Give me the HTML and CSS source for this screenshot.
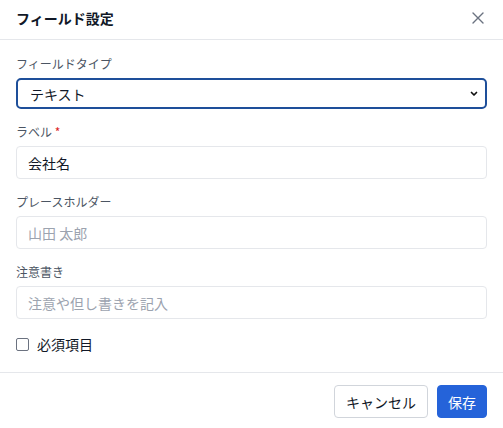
FILE: index.html
```html
<!DOCTYPE html>
<html lang="ja">
<head>
<meta charset="utf-8">
<title>フィールド設定</title>
<link rel="stylesheet" href="styles.css">
</head>
<body>
<div class="dialog">
  <header class="dialog-header">
    <h1 class="dialog-title">フィールド設定</h1>
    <button class="close-btn" type="button" aria-label="閉じる">
      <svg width="14" height="14" viewBox="0 0 14 14"><path d="M2 2L12 12M12 2L2 12" stroke="#6b7280" stroke-width="1.4" stroke-linecap="round"/></svg>
    </button>
  </header>
  <div class="dialog-body">
    <div class="field">
      <label class="field-label">フィールドタイプ</label>
      <div class="select">
        <span>テキスト</span>
        <svg width="10" height="10" viewBox="0 0 10 10"><path d="M2.5 3.5L5 6L7.5 3.5" fill="none" stroke="#111" stroke-width="1.7" stroke-linecap="round" stroke-linejoin="round"/></svg>
      </div>
    </div>
    <div class="field">
      <label class="field-label">ラベル <span class="req">*</span></label>
      <div class="input">会社名</div>
    </div>
    <div class="field">
      <label class="field-label">プレースホルダー</label>
      <div class="input placeholder">山田 太郎</div>
    </div>
    <div class="field">
      <label class="field-label">注意書き</label>
      <div class="input placeholder">注意や但し書きを記入</div>
    </div>
    <label class="check">
      <span class="box"></span>
      <span>必須項目</span>
    </label>
  </div>
  <footer class="dialog-footer">
    <button class="btn btn-secondary" type="button">キャンセル</button>
    <button class="btn btn-primary" type="button">保存</button>
  </footer>
</div>
</body>
</html>
```
FILE: styles.css
```css
* { box-sizing: border-box; }

html, body {
  margin: 0;
  background: #fff;
  font-family: "Noto Sans CJK JP", "Noto Sans", sans-serif;
  color: #111827;
}

.dialog {
  width: 503px;
  height: 428px;
  display: flex;
  flex-direction: column;
}

.dialog-header {
  height: 40px;
  padding: 0 16px;
  display: flex;
  align-items: center;
  justify-content: space-between;
  border-bottom: 1px solid #e5e7eb;
}

.dialog-title {
  margin: 0;
  font-size: 14px;
  font-weight: 700;
  line-height: 20px;
  margin-top: -4px;
}

.close-btn {
  border: 0;
  background: none;
  padding: 0;
  width: 14px;
  height: 14px;
  margin-top: -3px;
  margin-right: 2px;
  display: flex;
}

.dialog-body {
  padding: 16px 16px 0;
  flex: 1;
}

.field {
  margin-bottom: 15px;
}

.field-label {
  display: block;
  font-size: 12px;
  line-height: 16px;
  color: #4b5563;
  margin-bottom: 6px;
}

.req { color: #dc2626; }

.select {
  height: 31px;
  border: 2px solid #1e4f9a;
  border-radius: 5px;
  display: flex;
  align-items: center;
  justify-content: space-between;
  padding: 0 6px 0 12px;
  font-size: 14px;
}

.input {
  height: 33px;
  border: 1px solid #e5e7eb;
  border-radius: 4px;
  display: flex;
  align-items: center;
  padding: 0 11px;
  font-size: 14px;
  color: #111827;
}

.input.placeholder { color: #9ca3af; }

.check {
  display: flex;
  align-items: center;
  gap: 8px;
  font-size: 14px;
  margin-top: 2px;
}

.box {
  width: 13px;
  height: 13px;
  border: 1px solid #6b7280;
  border-radius: 2px;
}

.dialog-footer {
  border-top: 1px solid #e5e7eb;
  padding: 12px 16px 10px;
  display: flex;
  justify-content: flex-end;
  gap: 9px;
}

.btn {
  height: 33px;
  border-radius: 4px;
  font-family: inherit;
  font-size: 14px;
  padding: 0 11px;
}

.btn-secondary {
  background: #fff;
  border: 1px solid #d1d5db;
  color: #111827;
}

.btn-primary {
  background: #2563d9;
  border: 1px solid #2563d9;
  color: #fff;
  padding: 0 10px;
}
```
